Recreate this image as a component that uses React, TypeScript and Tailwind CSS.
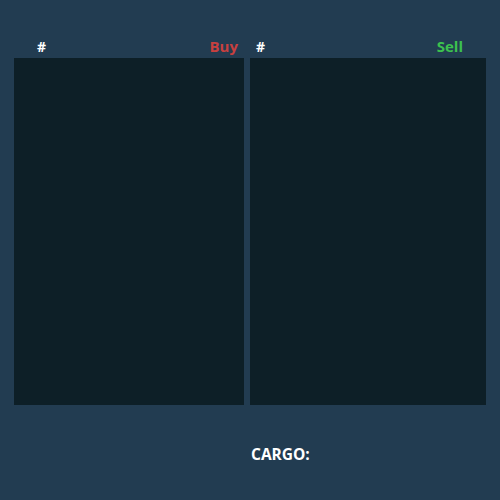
import React from 'react';

const font = { fontFamily: '"Open Sans", "Noto Sans", sans-serif' };

function Column({ label, color, width, pad }: { label: string; color: string; width: string; pad: string }) {
  return (
    <div className={`flex flex-col ${width}`}>
      {/* header row */}
      <div className={`flex h-[24px] items-end justify-between pb-[4px] ${pad}`}>
        <span className="text-[14px] font-bold leading-none text-white">#</span>
        <span className={`text-[15px] font-bold leading-none ${color}`}>{label}</span>
      </div>
      <div className="h-[347px] bg-[#0d1f27]" />
    </div>
  );
}

function App() {
  return (
    <div className="flex h-[500px] w-[500px] flex-col bg-[#223c51]" style={font}>
      <div className="flex gap-[6px] px-[14px] pt-[34px]">
        <Column label="Buy" color="text-[#c8403f]" width="w-[230px]" pad="pl-[23px] pr-[6px]" />
        <Column label="Sell" color="text-[#3cc14e]" width="w-[236px]" pad="pl-[6px] pr-[23px]" />
      </div>
      <div className="flex pl-[251px] pt-[42px]">
        <span className="text-[15.5px] font-bold leading-none text-white">CARGO:</span>
      </div>
    </div>
  );
}

export default App;
